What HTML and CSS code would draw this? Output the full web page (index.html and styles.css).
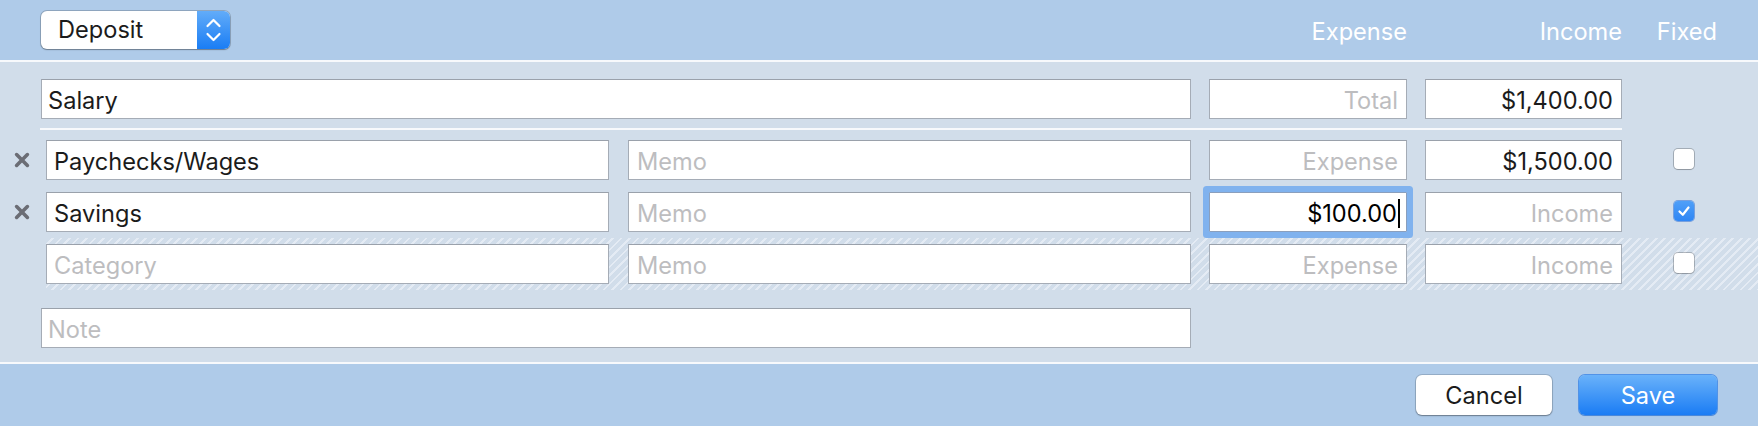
FILE: index.html
```html
<!DOCTYPE html>
<html>
<head>
<meta charset="utf-8">
<link rel="stylesheet" href="styles.css">
</head>
<body>
<div class="window">
  <div class="header">
    <div class="popup">
      <span class="popup-label">Deposit</span>
      <span class="stepper">
        <svg width="33" height="38" viewBox="0 0 33 38"><polyline points="10.5,15 16.5,9 22.5,15" fill="none" stroke="#fff" stroke-width="2.2" stroke-linecap="round" stroke-linejoin="round"/><polyline points="10.5,23 16.5,29 22.5,23" fill="none" stroke="#fff" stroke-width="2.2" stroke-linecap="round" stroke-linejoin="round"/></svg>
      </span>
    </div>
    <div class="hcol exp">Expense</div>
    <div class="hcol inc">Income</div>
    <div class="hcol fix">Fixed</div>
  </div>
  <div class="divider"></div>
  <div class="content">
    <div class="summary">
      <div class="field wide">Salary</div>
      <div class="field money ph">Total</div>
      <div class="field money inc-w">$1,400.00</div>
    </div>
    <div class="sep"></div>
    <div class="splits">
      <div class="row">
        <div class="del"><svg width="16" height="16" viewBox="0 0 16 16"><path d="M2.6 2.6 L13.4 13.4 M13.4 2.6 L2.6 13.4" stroke="#6b6d75" stroke-width="3.6" stroke-linecap="round"/></svg></div>
        <div class="field cat">Paychecks/Wages</div>
        <div class="field memo ph">Memo</div>
        <div class="field money ph">Expense</div>
        <div class="field money inc-w">$1,500.00</div>
        <div class="fixed"><span class="check"></span></div>
      </div>
      <div class="row">
        <div class="del"><svg width="16" height="16" viewBox="0 0 16 16"><path d="M2.6 2.6 L13.4 13.4 M13.4 2.6 L2.6 13.4" stroke="#6b6d75" stroke-width="3.6" stroke-linecap="round"/></svg></div>
        <div class="field cat">Savings</div>
        <div class="field memo ph">Memo</div>
        <div class="field money focus"><span class="caret">$100.00</span></div>
        <div class="field money inc-w ph">Income</div>
        <div class="fixed"><span class="check on"><svg width="20" height="20" viewBox="0 0 20 20"><polyline points="5.5,10.5 8.8,13.8 14.5,6.5" fill="none" stroke="#fff" stroke-width="2.2" stroke-linecap="round" stroke-linejoin="round"/></svg></span></div>
      </div>
      <div class="row new">
        <div class="field cat ph">Category</div>
        <div class="field memo ph">Memo</div>
        <div class="field money ph">Expense</div>
        <div class="field money inc-w ph">Income</div>
        <div class="fixed"><span class="check"></span></div>
      </div>
    </div>
    <div class="note-row">
      <div class="field wide ph">Note</div>
    </div>
  </div>
  <div class="divider"></div>
  <div class="footer">
    <div class="btn cancel">Cancel</div>
    <div class="btn save">Save</div>
  </div>
</div>
</body>
</html>
```

FILE: styles.css
```css
* { box-sizing: border-box; }
html, body { margin: 0; padding: 0; }
body {
  width: 1758px;
  height: 426px;
  overflow: hidden;
  font-family: Inter, "Liberation Sans", sans-serif;
  font-size: 23.6px;
  color: #1b1b1b;
}
.window {
  display: flex;
  flex-direction: column;
  height: 426px;
  background: #d1ddea;
}
.header {
  height: 60px;
  background: #afcbe9;
  display: flex;
  align-items: center;
  padding: 0 41px;
}
.popup {
  width: 189px;
  height: 38px;
  background: #fff;
  border-radius: 6px;
  box-shadow: 0 0 0 1px rgba(0,0,0,0.18), 0 1px 1.5px rgba(0,0,0,0.25);
  display: flex;
  align-items: center;
  overflow: hidden;
}
.popup-label {
  flex: 1;
  padding-left: 17px;
  line-height: 40px;
}
.stepper {
  width: 33px;
  height: 38px;
  background: linear-gradient(#62acf9, #1a7df4);
  display: flex;
}
.hcol {
  color: #fff;
  text-align: right;
  padding-top: 2px;
}
.hcol.exp { margin-left: auto; width: 198px; }
.hcol.inc { margin-left: 18px; width: 197px; }
.hcol.fix { width: 95px; }
.divider {
  height: 2px;
  background: #f7f9fc;
}
.content {
  height: 300px;
  padding-top: 17px;
}
.field {
  height: 40px;
  background: #fff;
  border: 1px solid #a5acb6;
  border-top-color: #9aa1ab;
  padding: 0 8px;
  line-height: 42px;
  white-space: nowrap;
  overflow: hidden;
}
.field.ph { color: #bdbdbf; }
.field.money { width: 198px; text-align: right; }
.field.money.inc-w { width: 197px; }
.summary {
  display: flex;
  gap: 18px;
  padding-left: 41px;
}
.field.wide { width: 1150px; padding-left: 6px; }
.sep {
  margin: 9px 0 0 40px;
  width: 1582px;
  height: 2px;
  background: #f7f9fc;
}
.splits {
  margin-top: 10px;
  display: flex;
  flex-direction: column;
}
.row {
  display: flex;
  align-items: center;
  height: 40px;
  margin-bottom: 12px;
}
.row .field.memo { margin-left: 19px; width: 563px; }
.row .field.money { margin-left: 18px; }
.field.cat { width: 563px; padding-left: 7px; }
.del {
  width: 46px;
  padding-left: 14px;
  display: flex;
  align-items: center;
}
.row:nth-child(2) { margin-bottom: 6px; }
.row.new {
  height: 52px;
  margin: 0 0 0 46px;
  padding: 6px 0;
  background: repeating-linear-gradient(135deg, #d1ddea 0 4px, #e4ebf4 4px 6px);
}
.fixed {
  width: 136px;
  padding-left: 52px;
  display: flex;
  align-items: center;
}
.check {
  width: 20px;
  height: 20px;
  border-radius: 4px;
  background: #fff;
  box-shadow: 0 0 0 1px rgba(0,0,0,0.22), 0 1px 1px rgba(0,0,0,0.12);
  display: block;
  margin-top: -2px;
}
.check.on {
  background: linear-gradient(#4f9ff8, #2f86f4);
  box-shadow: 0 0 0 1px rgba(30,100,210,0.5);
}
.check svg { display: block; }
.field.focus {
  border-radius: 1px;
  border-color: #8a9fbd;
  box-shadow: 0 0 0 6px #80b2ee;
  padding-right: 6px;
}
.caret {
  border-right: 2px solid #000;
  padding-right: 1px;
  color: #000;
}
.note-row {
  margin-top: 18px;
  padding-left: 41px;
}
.footer {
  flex: 1;
  background: #afcbe9;
  display: flex;
  justify-content: flex-end;
  align-items: flex-start;
  padding: 11px 41px 0 0;
  gap: 27px;
}
.btn {
  height: 40px;
  border-radius: 6px;
  text-align: center;
  line-height: 42px;
}
.btn.cancel {
  width: 136px;
  background: #fff;
  box-shadow: 0 0 0 1px rgba(0,0,0,0.14), 0 1px 1.5px rgba(0,0,0,0.3);
  color: #1b1b1b;
}
.btn.save {
  width: 138px;
  background: linear-gradient(#6ab2fa, #1a7cf4);
  box-shadow: 0 0 0 1px rgba(20,110,230,0.6), 0 1px 1px rgba(0,0,0,0.15);
  color: #fff;
}
```
